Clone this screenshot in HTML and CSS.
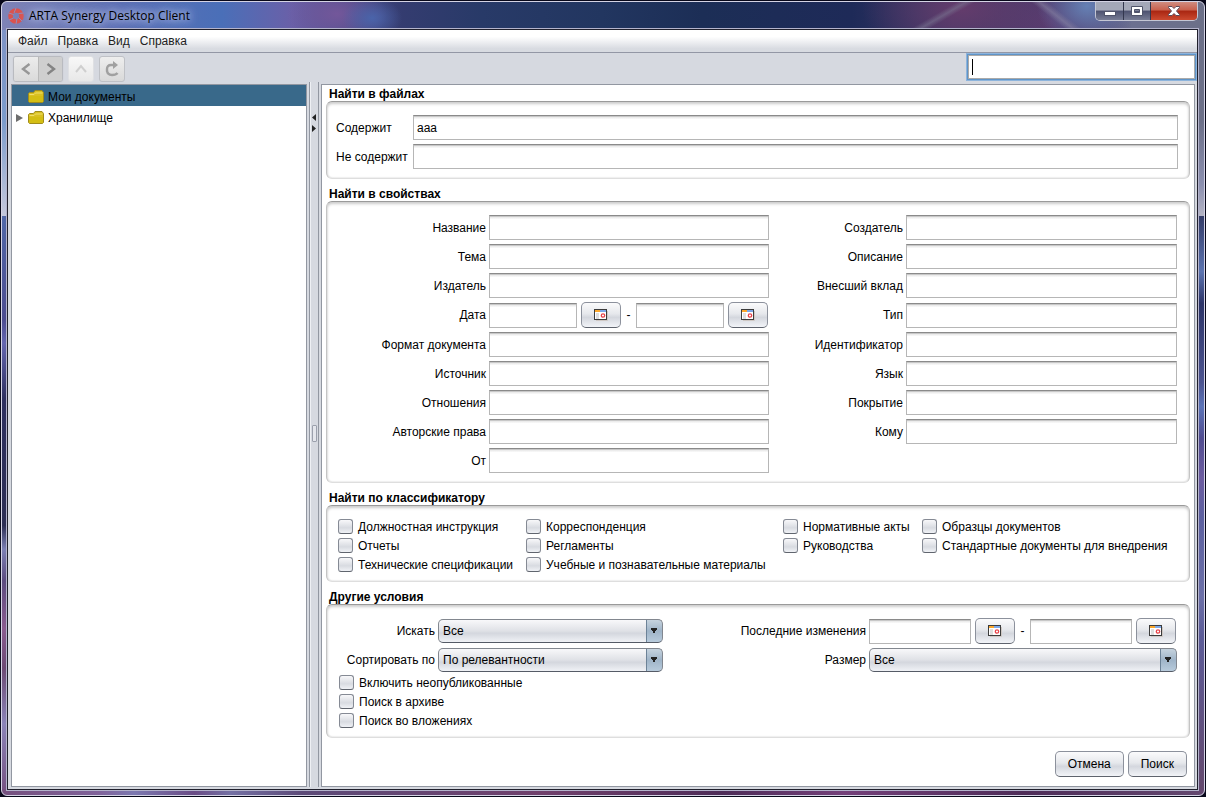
FILE: index.html
```
<!DOCTYPE html>
<html lang="ru">
<head>
<meta charset="utf-8">
<title>ARTA Synergy Desktop Client</title>
<link rel="stylesheet" href="styles.css">
</head>
<body>
<svg class="defs" width="0" height="0" aria-hidden="true">
  <symbol id="calendar" viewBox="0 0 14 12">
    <path d="M2 11.5H13.5V2" fill="none" stroke="#cfc8c4"/>
    <rect x=".5" y=".5" width="12" height="10" fill="#fff" stroke="#3c3c3c"/>
    <rect x="1" y="1" width="5" height="2" fill="#fba72c"/>
    <rect x="6" y="1" width="6" height="2" fill="#7ba7e8"/>
    <rect x="2" y="4" width="3" height="6" fill="#dedede"/>
    <circle cx="9" cy="6.500" r="1.700" fill="#fff" stroke="#e8454b" stroke-width="1.300"/>
  </symbol>
  <symbol id="folder" viewBox="0 0 16 13">
    <path d="M.5 3.500 1.500 2.500h4L7 .5h7l1.500 2v9l-1 1h-13l-1-1z" fill="#d9c022" stroke="#a08c1c"/>
    <path d="M1 6h14v6H1z" fill="#d4be14"/>
    <path d="M1.500 4.500h4.500L7.500 3h7" fill="none" stroke="#efe06a"/>
  </symbol>
</svg>
<div class="window">
  <header class="titlebar">
    <svg class="logo" viewBox="0 0 16 16" width="16" height="16" aria-hidden="true">
      <circle cx="8" cy="8" r="5.500" fill="none" stroke="#d9534f" stroke-width="4.600"/>
      <path d="M8 0 6 5M15.500 5 10.500 5.500M14 13 10.500 9.500M8 16 9 10.500M1 12 5.500 10M.5 5 5.500 6.500" stroke="#8d93c4" stroke-width=".9"/>
    </svg>
    <h1 class="title">ARTA Synergy Desktop Client</h1>
    <div class="caption">
      <button class="cap cap-min" type="button" aria-label="Свернуть"><svg viewBox="0 0 12 12" width="12" height="12"><rect x=".5" y="6.500" width="11" height="4" fill="#fff" stroke="#50546a"/></svg></button>
      <button class="cap cap-max" type="button" aria-label="Развернуть"><svg viewBox="0 0 12 10" width="12" height="10"><path d="M.5.5h11v9H.5zM3.500 3.500v3h5v-3z" fill="#fff" fill-rule="evenodd" stroke="#50546a"/></svg></button>
      <button class="cap cap-close" type="button" aria-label="Закрыть"><svg viewBox="0 0 12 10" width="12" height="10"><path d="M.5.5h3.500l2 2 2-2h3.500v1L8.500 5l3 3.500v1H8l-2-2-2 2H.5v-1l3-3.500-3-3.500z" fill="#fff" stroke="#5c4a58"/></svg></button>
    </div>
  </header>
  <div class="client">
    <nav class="menubar">
      <button type="button">Файл</button><button type="button">Правка</button><button type="button">Вид</button><button type="button">Справка</button>
    </nav>
    <div class="toolbar">
      <div class="tools">
        <div class="pair">
          <button type="button" aria-label="Назад"><svg viewBox="0 0 12 12" width="12" height="12"><path d="M9.500 1 3 6l6.500 5" fill="none" stroke="#979797" stroke-width="2.400"/></svg></button><button class="pressed" type="button" aria-label="Вперёд"><svg viewBox="0 0 12 12" width="12" height="12"><path d="M2.500 1 9 6l-6.500 5" fill="none" stroke="#848484" stroke-width="2.400"/></svg></button>
        </div>
        <button class="tool tool-up" type="button" aria-label="Вверх"><svg viewBox="0 0 12 12" width="12" height="12"><path d="M1 9 6 3l5 6" fill="none" stroke="#cfcfcf" stroke-width="2"/></svg></button>
        <button class="tool" type="button" aria-label="Обновить"><svg viewBox="0 0 14 16" width="14" height="16"><path d="M9 4H6Q2 4 2 8t0 1q0 5 5 5 4 0 5.500-2" fill="none" stroke="#a0a0a0" stroke-width="2.400"/><path d="M8 0v8l5-4z" fill="#a0a0a0"/></svg></button>
      </div>
      <input class="search" type="text" aria-label="Быстрый поиск">
    </div>
    <main class="main">
      <aside class="tree">
        <div class="node selected"><span class="twist"></span><svg width="16" height="13" aria-hidden="true"><use href="#folder"/></svg><span>Мои документы</span></div>
        <div class="node"><span class="twist"><svg viewBox="0 0 7 8" width="7" height="8" aria-hidden="true"><path d="M0 0v8l7-4z" fill="#6e6e6e"/></svg></span><svg width="16" height="13" aria-hidden="true"><use href="#folder"/></svg><span>Хранилище</span></div>
      </aside>
      <div class="splitter">
        <svg viewBox="0 0 4 18" width="4" height="18" aria-hidden="true"><path d="M4 0v7L0 3.500zM0 11v7l4-3.500z" fill="#222"/></svg>
        <span class="grip"></span>
      </div>
      <form class="form">
        <section>
          <h2>Найти в файлах</h2>
          <div class="box files">
            <label for="has">Содержит</label><input id="has" type="text" value="ааа">
            <label for="hasnot">Не содержит</label><input id="hasnot" type="text">
          </div>
        </section>
        <section>
          <h2>Найти в свойствах</h2>
          <div class="box props">
            <label for="p1">Название</label><input id="p1" type="text"><label for="q1">Создатель</label><input id="q1" type="text">
            <label for="p2">Тема</label><input id="p2" type="text"><label for="q2">Описание</label><input id="q2" type="text">
            <label for="p3">Издатель</label><input id="p3" type="text"><label for="q3">Внесший вклад</label><input id="q3" type="text">
            <label for="p4">Дата</label>
            <div class="range"><input id="p4" type="text"><button class="btn" type="button" aria-label="Календарь"><svg width="14" height="12"><use href="#calendar"/></svg></button><span class="dash">-</span><input type="text" aria-label="Дата по"><button class="btn" type="button" aria-label="Календарь"><svg width="14" height="12"><use href="#calendar"/></svg></button></div>
            <label for="q4">Тип</label><input id="q4" type="text">
            <label for="p5">Формат документа</label><input id="p5" type="text"><label for="q5">Идентификатор</label><input id="q5" type="text">
            <label for="p6">Источник</label><input id="p6" type="text"><label for="q6">Язык</label><input id="q6" type="text">
            <label for="p7">Отношения</label><input id="p7" type="text"><label for="q7">Покрытие</label><input id="q7" type="text">
            <label for="p8">Авторские права</label><input id="p8" type="text"><label for="q8">Кому</label><input id="q8" type="text">
            <label for="p9">От</label><input id="p9" type="text">
          </div>
        </section>
        <section>
          <h2>Найти по классификатору</h2>
          <div class="box classes">
            <label class="check"><input type="checkbox">Должностная инструкция</label>
            <label class="check"><input type="checkbox">Корреспонденция</label>
            <label class="check"><input type="checkbox">Нормативные акты</label>
            <label class="check"><input type="checkbox">Образцы документов</label>
            <label class="check"><input type="checkbox">Отчеты</label>
            <label class="check"><input type="checkbox">Регламенты</label>
            <label class="check"><input type="checkbox">Руководства</label>
            <label class="check"><input type="checkbox">Стандартные документы для внедрения</label>
            <label class="check"><input type="checkbox">Технические спецификации</label>
            <label class="check"><input type="checkbox">Учебные и познавательные материалы</label>
          </div>
        </section>
        <section>
          <h2>Другие условия</h2>
          <div class="box other">
            <div class="conditions">
              <label for="what">Искать</label><select id="what"><option>Все</option></select>
              <label for="changed">Последние изменения</label>
              <div class="range"><input id="changed" type="text"><button class="btn" type="button" aria-label="Календарь"><svg width="14" height="12"><use href="#calendar"/></svg></button><span class="dash">-</span><input type="text" aria-label="Последние изменения по"><button class="btn" type="button" aria-label="Календарь"><svg width="14" height="12"><use href="#calendar"/></svg></button></div>
              <label for="sort">Сортировать по</label><select id="sort"><option>По релевантности</option></select>
              <label for="size">Размер</label><select id="size"><option>Все</option></select>
            </div>
            <label class="check"><input type="checkbox">Включить неопубликованные</label>
            <label class="check"><input type="checkbox">Поиск в архиве</label>
            <label class="check"><input type="checkbox">Поиск во вложениях</label>
          </div>
        </section>
        <div class="actions"><button class="btn" type="button">Отмена</button><button class="btn" type="submit">Поиск</button></div>
      </form>
    </main>
  </div>
</div>
</body>
</html>
```
FILE: styles.css
```
* { box-sizing: border-box; }
body {
  margin: 0;
  min-height: 100vh;
  display: flex;
  background: #08081a;
  font: 12px/14px "Liberation Sans", Arial, sans-serif;
  color: #000;
}
button, input, select { font: inherit; color: inherit; margin: 0; border-radius: 0; }
button { padding: 0; display: flex; align-items: center; justify-content: center; }
h1, h2 { margin: 0; font-size: 12px; }
.defs { position: absolute; }

.window {
  flex: 1;
  display: flex;
  flex-direction: column;
  margin: 1px;
  padding: 0 6px 5px 5px;
  border: 1px solid #d4d3e4;
  border-radius: 6px;
  background:
    linear-gradient(150deg, transparent 42%, #7c7a9488 50%, transparent 58%) 905px 0 / 70px 28px no-repeat,
    linear-gradient(38deg, transparent 40%, #8a86a488 50%, transparent 60%) 1030px 0 / 50px 28px no-repeat,
    radial-gradient(ellipse 50px 40px at 1085px 4px, #6580b4, transparent),
    radial-gradient(ellipse 100px 60px at 960px 6px, #643c6c, transparent),
    radial-gradient(ellipse 80px 60px at 1050px 20px, #5a3c70, transparent),
    radial-gradient(ellipse 30px 20px at 370px 16px, #4a64aa, transparent),
    radial-gradient(ellipse 50px 30px at 335px 12px, #73579a, transparent),
    linear-gradient(90deg, #7f83b6 0, #5c6eb4 120px, #4a6fb8 220px, #6a60a8 290px, #343c70 400px, #283a68 480px, #223660 600px, #1c2e56 700px, #1e2a58 850px, #3e3866 950px, #3c3a68 1060px, #6c7090 1130px, #6c7088 100%) 0 0 / 100% 28px no-repeat,
    linear-gradient(90deg, #75507e, #80629a 8%, #7c78b0 11%, #6a4c86 16%, #7470a4 19%, #5c4a78 25%, #70406c 45%, #4e2c58 60%, #74407a 70%, #4e2c58 85%, #644870) 0 100% / 100% 6px no-repeat,
    linear-gradient(180deg, #7f90c4, #7c9ccc 15%, #c4c8dc 27%, #5068a8 27%, #4c4c90 40%, #6466b0 43%, #2e3060 50%, #2c2e54 66%, #7c80b4 69%, #5c4c80 73%, #8a5c90 79%, #6c4a74 84%, #8a84b8 91%, #755080) 0 0 / 50% 100% no-repeat,
    linear-gradient(180deg, #6c7088, #6c7088 15%, #8c90b0 23%, #b4b4c4 27%, #343c68 27%, #5c74b0 34%, #2c3468 38%, #4c5490 48%, #5c74b8 51%, #504c90 55%, #6c5ca0 60%, #5c60a0 65%, #6c70a8 75%, #5c5c98 80%, #64486c) 100% 0 / 50% 100% no-repeat;
}
.titlebar { display: flex; align-items: center; height: 27px; padding-left: 1px; }
.title {
  margin-left: 5px;
  flex: 1;
  font: 12px/16px "Open Sans", "Noto Sans", sans-serif;
  text-shadow: 0 0 6px #b8c4e8, 0 0 10px #b8c4e8, 0 0 14px #a8b4e0;
}
.caption {
  align-self: flex-start;
  display: flex;
  height: 19px;
  border: 1px solid #c4c6d4;
  border-top: 0;
  border-radius: 0 0 5px 5px;
  overflow: hidden;
}
.cap { height: 18px; border: 0; border-right: 1px solid #33374e; background: linear-gradient(#a4a8b8 0 45%, #4d5270 50%, #777c94); }
.cap-min { width: 28px; }
.cap-max { width: 27px; }
.cap-close { width: 46px; border: 0; background: linear-gradient(#cf8c80 0, #c8604c 45%, #a92612 50%, #cc4a30); }

.client {
  flex: 1;
  display: flex;
  flex-direction: column;
  border: 1px solid #20202c;
  outline: 1px solid #b4b4cc;
  background: #d6d9e0;
}
.menubar { display: flex; gap: 10px; height: 23px; padding: 0 10px; border-bottom: 1px solid #9397a5; background: linear-gradient(#fff 0 30%, #d8dbe1 85%); }
.menubar button { border: 0; background: none; color: #222; }
.toolbar { display: flex; justify-content: space-between; align-items: flex-start; height: 31px; padding: 1px 1px 0 5px; }
.tools { display: flex; gap: 5px; padding-top: 2px; }
.pair { display: flex; border: 1px solid #b9bbc0; border-radius: 3px; overflow: hidden; box-shadow: 0 0 1px #b9bbc0; }
.pair button { width: 24px; height: 24px; border: 0; background: linear-gradient(#ececec, #dadada); }
.pair .pressed { border-left: 1px solid #b9b9b9; background: #cfcfcf; }
.tool { width: 26px; height: 26px; border: 1px solid #bfc1c6; border-radius: 3px; background: linear-gradient(#eee, #d9d9d9); }
.tool-up { border-color: #dfe0e3; background: linear-gradient(#f8f8f8, #e8e8e8); }

input[type="text"] {
  width: 100%;
  min-width: 0;
  height: 25px;
  padding: 0 3px;
  border: 1px solid #b6b6b6;
  border-top-color: #8a8a8a;
  background: linear-gradient(#c8c8c8 0 1px, #ececec 1px 2px, #fff 3px);
  outline: 0;
}
.toolbar .search {
  width: 229px;
  height: 26px;
  outline: 1px solid #8db4dc;
  border: 1px solid #5f94c8;
  box-shadow: inset 0 0 0 1px #aaa;
  background: linear-gradient(#000, #000) 4px 4px / 1px 16px no-repeat, #fff;
}

.main { flex: 1; display: flex; padding: 0 2px 2px 3px; }
.tree { width: 296px; border: 1px solid #9297a1; background: #fff; }
.node { display: flex; align-items: center; gap: 4px; height: 21px; padding: 2px 0 0 4px; }
.selected { background: #39698a; }
.twist { display: flex; width: 8px; }
.splitter { width: 10px; margin: -2px 1px 0 2px; border: 1px solid #9297a1; border-width: 0 1px; padding: 32px 2px; box-shadow: inset 1px 0 #eef0f4; display: flex; flex-direction: column; align-items: center; }
.grip { width: 5px; height: 17px; margin-top: 293px; border: 1px solid #9ba0ac; border-radius: 1px; background: #e4e6ec; }

.form { flex: 1; min-width: 0; display: flex; flex-direction: column; gap: 8px; margin-left: 1px; padding: 2px 4px 8px; border: 1px solid #9297a1; background: #fff; }
.form h2 { padding-left: 3px; }
.box {
  border: 1px solid #c4c4c4;
  border-top-color: #9a9a9a;
  border-bottom-color: #dedede;
  border-radius: 6px;
  box-shadow: inset 0 2px 3px #ccc, inset 0 0 2px #ccc;
}
.files { display: grid; grid-template-columns: 74px 1fr; gap: 4px 3px; align-items: center; padding: 13px 11px 9px 9px; }
.props { display: grid; grid-template-columns: 147px 280fr 131px 271fr; gap: 4px 3px; align-items: center; padding: 13px 12px 9px; }
.props > label, .conditions > label { text-align: right; white-space: nowrap; }
.range { display: flex; align-items: center; gap: 4px; padding-right: 1px; }
.range input { flex: 1; }
.dash { width: 7px; text-align: center; }
.btn {
  height: 26px;
  border: 1px solid #8c919c;
  border-bottom-color: #5e636d;
  border-radius: 5px;
  background: linear-gradient(#fbfbfc, #e6e8ec 45%, #d4d7de 60%, #f2f4f8);
}
.range .btn { width: 40px; flex: none; }
.classes { display: grid; grid-template-columns: 179px 248px 130px 1fr; column-gap: 9px; padding: 11px 11px 7px; }
.check { display: flex; align-items: center; gap: 5px; height: 19px; white-space: nowrap; }
.check input {
  appearance: none;
  width: 15px;
  height: 15px;
  margin: 0;
  border: 1px solid #858a94;
  border-bottom-color: #60656e;
  border-radius: 3px;
  background: linear-gradient(#f8f8fa, #d8dbe1 60%, #f0f2f6);
}
.other { padding: 13px 12px 7px; }
.conditions { display: grid; grid-template-columns: 96px 225fr 200px 308fr; gap: 4px 3px; align-items: center; margin-bottom: 1px; }
select {
  appearance: none;
  width: 100%;
  height: 24px;
  padding: 0 20px 0 4px;
  border: 1px solid #82878f;
  border-bottom-color: #555b66;
  border-radius: 5px;
  background:
    conic-gradient(from -30deg at 50% 100%, #222 60deg, transparent 0) right 4px center / 8px 6px no-repeat,
    linear-gradient(90deg, #6c8297 1px, transparent 0) right 0 top 0 / 16px 100% no-repeat,
    linear-gradient(#c6d3de, #9fb4c8 50%, #b8cbdc) right 0 top 0 / 16px 100% no-repeat,
    linear-gradient(#f8f8fa, #dfe1e6 50%, #d4d7de 60%, #f0f2f6);
}
.actions { display: flex; justify-content: flex-end; gap: 4px; margin-top: 5px; padding-right: 3px; }
.actions .btn { padding: 0 12px; }
```
